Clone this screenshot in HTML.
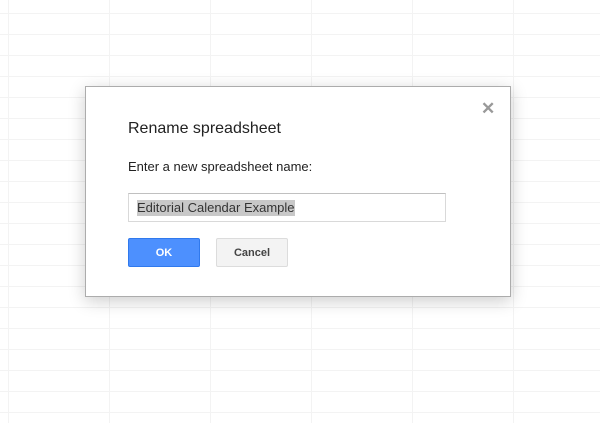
<!DOCTYPE html>
<html><head><style>
html,body{margin:0;padding:0}
body{width:600px;height:423px;overflow:hidden;position:relative;background:#fff;font-family:"Liberation Sans",Arial,sans-serif;
background-image:linear-gradient(#f3f3f3,#f3f3f3),linear-gradient(90deg,#f3f3f3 1px,transparent 1px),linear-gradient(#f3f3f3 1px,transparent 1px);
background-size:1px 100%,101px 100%,100% 21px;background-position:8px 0,8px 0,0 13px;background-repeat:no-repeat,repeat,repeat}
.d{position:absolute;left:85px;top:86px;width:424px;height:209px;background:#fff;border:1px solid #acacac;box-shadow:0 4px 16px rgba(0,0,0,.2)}
.x{position:absolute;left:395px;top:12px;font-size:17px;color:#999;font-weight:bold}
.t{position:absolute;left:42px;top:33px;font-size:16px;color:#222}
.l{position:absolute;left:42px;top:72px;font-size:13px;color:#222}
.i{position:absolute;left:42px;top:106px;width:316px;height:27px;border:1px solid #d9d9d9;border-top-color:#c0c0c0}
.i span{position:absolute;left:8px;top:6px;font-size:13px;color:#333;background:#c8c8c8;line-height:16px}
.b{position:absolute;top:151px;height:29px;width:72px;border-radius:2px;font-size:11px;font-weight:bold;text-align:center;line-height:29px;box-sizing:border-box}
.ok{left:42px;background:#4d90fe;border:1px solid #3079ed;color:#fff}
.c{left:130px;background:#f3f3f3;border:1px solid #dcdcdc;color:#444}
</style></head><body>
<div class="d">
<div class="x">✕</div>
<div class="t">Rename spreadsheet</div>
<div class="l">Enter a new spreadsheet name:</div>
<div class="i"><span>Editorial Calendar Example</span></div>
<div class="b ok">OK</div>
<div class="b c">Cancel</div>
</div>
</body></html>
